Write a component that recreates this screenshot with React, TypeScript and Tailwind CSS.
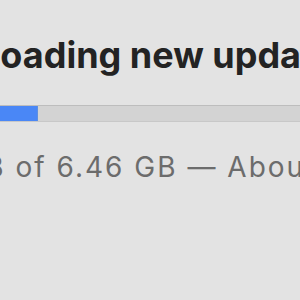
export default function App() {
  const progress = 148;

  return (
    <div className="w-[300px] h-[300px] overflow-hidden bg-[#e3e3e3] font-['Inter',sans-serif]">
      <div className="ml-[-110px] pt-[37px] flex flex-col w-[700px]">
        <h1 className="whitespace-nowrap text-[36px] leading-none font-bold text-[#232323]">
          Downloading new update…
        </h1>
        <div className="mt-[32px] h-[17px] w-[600px] bg-[#d3d3d3] border-t border-[#bdbdbd] border-b border-b-[#c8c8c8] flex">
          <div
            className="h-full bg-[#4a87f6] border-r border-[#5e8fe0]"
            style={{ width: progress }}
          />
        </div>
        <p className="mt-[31px] ml-[1px] whitespace-nowrap text-[28px] leading-none tracking-[2px] text-[#6c6c6c]">
          1.25 GB of 6.46 GB — About 12 minutes remaining
        </p>
      </div>
    </div>
  );
}
